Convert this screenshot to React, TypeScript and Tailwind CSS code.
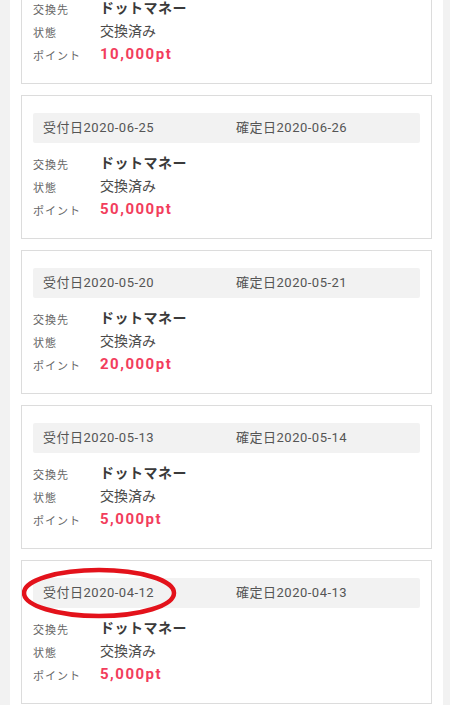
import React from "react";

type Exchange = {
  received: string;
  confirmed: string;
  partner: string;
  status: string;
  points: string;
  marked?: boolean;
};

const exchanges: Exchange[] = [
  { received: "2020-07-10", confirmed: "2020-07-11", partner: "ドットマネー", status: "交換済み", points: "10,000pt" },
  { received: "2020-06-25", confirmed: "2020-06-26", partner: "ドットマネー", status: "交換済み", points: "50,000pt" },
  { received: "2020-05-20", confirmed: "2020-05-21", partner: "ドットマネー", status: "交換済み", points: "20,000pt" },
  { received: "2020-05-13", confirmed: "2020-05-14", partner: "ドットマネー", status: "交換済み", points: "5,000pt" },
  { received: "2020-04-12", confirmed: "2020-04-13", partner: "ドットマネー", status: "交換済み", points: "5,000pt", marked: true },
];

function ExchangeCard({ item }: { item: Exchange }) {
  return (
    <div className="relative h-[144px] shrink-0 border border-[#dcdcdc] bg-white px-[11px] pt-[17px]">
      {/* dates */}
      <div className="flex h-[30px] items-center rounded-[2px] bg-[#f2f2f2] px-[10px] text-[13px] tracking-[0.5px] text-[#555]">
        <span className="w-[193px]">受付日{item.received}</span>
        <span>確定日{item.confirmed}</span>
      </div>

      <div className="mt-[9px] flex flex-col">
        <div className="flex h-[23px] items-center">
          <span className="w-[67px] pt-[5px] text-[11px] tracking-[1px] text-[#666]">交換先</span>
          <span className="text-[14px] font-bold tracking-[0.5px] text-[#3a3a3a]">{item.partner}</span>
        </div>
        <div className="flex h-[23px] items-center">
          <span className="w-[67px] pt-[5px] text-[11px] tracking-[1px] text-[#666]">状態</span>
          <span className="text-[14px] text-[#4a4a4a]">{item.status}</span>
        </div>
        <div className="flex h-[23px] items-center">
          <span className="w-[67px] pt-[5px] text-[11px] tracking-[1px] text-[#666]">ポイント</span>
          <span className="text-[15px] font-bold tracking-[1.5px] text-[#f23d5c]">{item.points}</span>
        </div>
      </div>

      {item.marked && (
        <svg className="pointer-events-none absolute left-0 top-0" width="170" height="70" viewBox="0 0 170 70">
          <ellipse cx="77" cy="32" rx="75" ry="23" fill="none" stroke="#e3121b" strokeWidth="4.5" />
        </svg>
      )}
    </div>
  );
}

export default function App() {
  return (
    <div
      className="flex h-[705px] w-[450px] overflow-hidden bg-[#f2f2f2]"
      style={{ fontFamily: "Roboto, 'Noto Sans CJK JP', sans-serif" }}
    >
      <div className="ml-[10px] flex w-[433px] flex-col bg-white px-[11px]">
        <div className="-mt-[60px] flex flex-col gap-[11px]">
          {exchanges.map((e) => (
            <ExchangeCard key={e.received} item={e} />
          ))}
        </div>
      </div>
    </div>
  );
}
